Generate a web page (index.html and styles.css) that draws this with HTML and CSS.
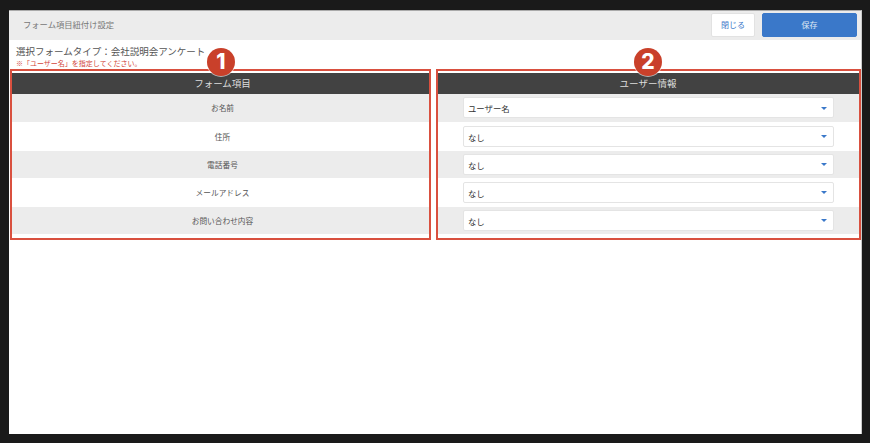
FILE: index.html
```html
<!DOCTYPE html>
<html lang="ja">
<head>
<meta charset="utf-8">
<title>フォーム項目紐付け設定</title>
<link rel="stylesheet" href="styles.css">
</head>
<body>
<div class="window">
  <header class="topbar">
    <span class="topbar-title">フォーム項目紐付け設定</span>
    <div class="actions">
      <button class="btn btn-close">閉じる</button>
      <button class="btn btn-save">保存</button>
    </div>
  </header>
  <div class="intro">
    <div class="form-type">選択フォームタイプ：会社説明会アンケート</div>
    <div class="warning">※「ユーザー名」を指定してください。</div>
  </div>
  <div class="tables">
    <section class="col col-left">
      <span class="callout callout-left"></span>
      <span class="badge badge-left">1</span>
      <h2 class="col-head">フォーム項目</h2>
      <div class="row row-a row-h1">お名前</div>
      <div class="row row-b row-h2">住所</div>
      <div class="row row-a row-h3">電話番号</div>
      <div class="row row-b row-h2">メールアドレス</div>
      <div class="row row-a row-h3">お問い合わせ内容</div>
    </section>
    <section class="col col-right">
      <span class="callout callout-right"></span>
      <span class="badge badge-right">2</span>
      <h2 class="col-head">ユーザー情報</h2>
      <div class="row row-a row-h1"><div class="select"><span>ユーザー名</span><i class="caret"></i></div></div>
      <div class="row row-b row-h2"><div class="select"><span>なし</span><i class="caret"></i></div></div>
      <div class="row row-a row-h3"><div class="select"><span>なし</span><i class="caret"></i></div></div>
      <div class="row row-b row-h2"><div class="select"><span>なし</span><i class="caret"></i></div></div>
      <div class="row row-a row-h3"><div class="select"><span>なし</span><i class="caret"></i></div></div>
    </section>
  </div>
</div>
</body>
</html>
```
FILE: styles.css
```css
* { box-sizing: border-box; }
html, body { margin: 0; height: 100%; }
body {
  background: #1a1a1a;
  padding: 10px 8px 9px 9px;
  font-family: "Noto Sans CJK JP", "Noto Sans", sans-serif;
  color: #555;
  overflow: hidden;
}
.window {
  background: #fff;
  height: 424px;
  border-top: 1px solid #aaa;
  border-right: 1px solid #ccc;
  display: flex;
  flex-direction: column;
}
.topbar {
  height: 29px;
  background: #ececec;
  display: flex;
  align-items: center;
  justify-content: space-between;
  padding: 0 4px 0 14px;
}
.topbar-title { font-size: 8.3px; color: #777; padding-bottom: 3px; }
.actions { display: flex; gap: 7px; margin-bottom: 1px; }
.btn {
  font-family: inherit;
  font-size: 8px;
  border-radius: 2px;
  padding: 0 0 2px;
  height: 24px;
}
.btn-close { width: 44px; background: #fff; border: 1px solid #e2e2e2; color: #3a78c9; }
.btn-save { width: 95px; background: #3a78c9; border: 1px solid #3a78c9; color: #dfe8f4; }
.intro { padding: 5px 0 0 7px; height: 31px; }
.form-type { font-size: 9.5px; line-height: 13px; color: #555; }
.warning { font-size: 7px; line-height: 8px; margin-top: 1px; color: #d2453a; }
.tables { display: flex; padding-left: 3px; padding-top: 2px; }
.col { position: relative; }
.col-left { width: 417px; margin-right: 8px; }
.col-left .col-head, .col-left .row { padding-left: 4px; }
.col-right { width: 422px; }
.col-head {
  margin: 0;
  height: 21px;
  line-height: 21px;
  background: #424242;
  color: #ddd;
  font-size: 9.5px;
  font-weight: 400;
  text-align: center;
}
.row {
  display: flex;
  align-items: center;
  justify-content: center;
  font-size: 7.7px;
  color: #555;
  padding-bottom: 1px;
}
.row-h1 { height: 28px; }
.row-h2 { height: 29px; }
.row-h3 { height: 27px; }
.row-a { background: #ececec; }
.row-b { background: #fff; }
.select {
  width: 371px;
  height: 21px;
  margin-left: 1px;
  background: #fff;
  border: 1px solid #e4e4e4;
  border-radius: 2px;
  display: flex;
  align-items: center;
  justify-content: space-between;
  padding: 1px 6px 0 4px;
  font-size: 8.4px;
  color: #333;
}
.caret {
  width: 0;
  height: 0;
  border-left: 3px solid transparent;
  border-right: 3px solid transparent;
  border-top: 3px solid #3a78c9;
}
.callout {
  position: absolute;
  border: 2px solid #d9503f;
  pointer-events: none;
}
.callout-left { left: -2px; top: -4px; width: 421px; height: 171px; }
.callout-right { left: -1px; top: -4px; width: 425px; height: 171px; }
.badge {
  position: absolute;
  width: 28px;
  height: 28px;
  border-radius: 50%;
  background: #c9402a;
  color: #fff;
  font-family: Inter, "Liberation Sans", sans-serif;
  font-weight: 800;
  font-size: 21px;
  line-height: 28px;
  text-align: center;
  box-shadow: 0 0 0 1px rgba(255, 255, 255, .6);
  z-index: 2;
}
.badge-left { left: 195px; top: -25px; }
.badge-right { left: 197px; top: -25px; }
```
